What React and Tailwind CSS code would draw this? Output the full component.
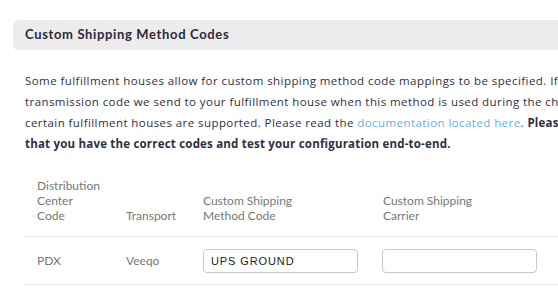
export default function App() {
  return (
    <div className="w-[558px] h-[295px] overflow-hidden bg-white">
      <div className="w-[640px] pt-5 pl-[13px]">
        {/* Section header */}
        <div className="h-[30px] bg-[#ececec] rounded-l-[5px] flex items-center pl-3">
          <h3 className="font-['Lato',sans-serif] font-bold text-[13px] tracking-[0.65px] text-[#2b2b3b]">
            Custom Shipping Method Codes
          </h3>
        </div>

        {/* Description */}
        <p className="mt-5 pl-3 font-['Open_Sans',sans-serif] text-[11.5px] leading-[21px] tracking-[0.43px] text-[#2f2f3f] whitespace-nowrap">
          Some fulfillment houses allow for custom shipping method code mappings to be specified. If specified, this will be the
          <br />
          transmission code we send to your fulfillment house when this method is used during the checkout process. Currently, only
          <br />
          certain fulfillment houses are supported. Please read the{' '}
          <a href="#" className="text-[#5bb5e6]">documentation located here</a>.{' '}
          <span className="font-bold tracking-[0.2px]">Please verify</span>
          <br />
          <span className="font-bold tracking-[0.2px]">that you have the correct codes and test your configuration end-to-end.</span>
        </p>

        {/* Mapping table */}
        <div className="mt-4 ml-3 font-['Lato',sans-serif] text-[12px] leading-[15px] text-[#777]">
          <div className="flex items-end border-b border-[#e6e6e6] pt-2 pb-[13px]">
            <div className="w-[89px] pl-3">Distribution<br />Center<br />Code</div>
            <div className="w-[77px] pl-3">Transport</div>
            <div className="w-[180px] pl-3">Custom Shipping<br />Method Code</div>
            <div className="w-[180px] pl-3">Custom Shipping<br />Carrier</div>
          </div>
          <div className="flex items-center border-b border-[#e6e6e6] h-[48px]">
            <div className="w-[89px] pl-3">PDX</div>
            <div className="w-[77px] pl-3">Veeqo</div>
            <div className="w-[180px] pl-3">
              <input
                defaultValue="UPS GROUND"
                className="w-[155px] h-[24px] border border-[#c8c8c8] rounded-[4px] px-[7px] font-['Liberation_Sans',sans-serif] text-[11px] tracking-[0.9px] text-[#222] outline-none"
              />
            </div>
            <div className="w-[180px] pl-[11px]">
              <input className="w-[155px] h-[24px] border border-[#c8c8c8] rounded-[4px] px-[7px] outline-none" />
            </div>
          </div>
        </div>
      </div>
    </div>
  );
}
